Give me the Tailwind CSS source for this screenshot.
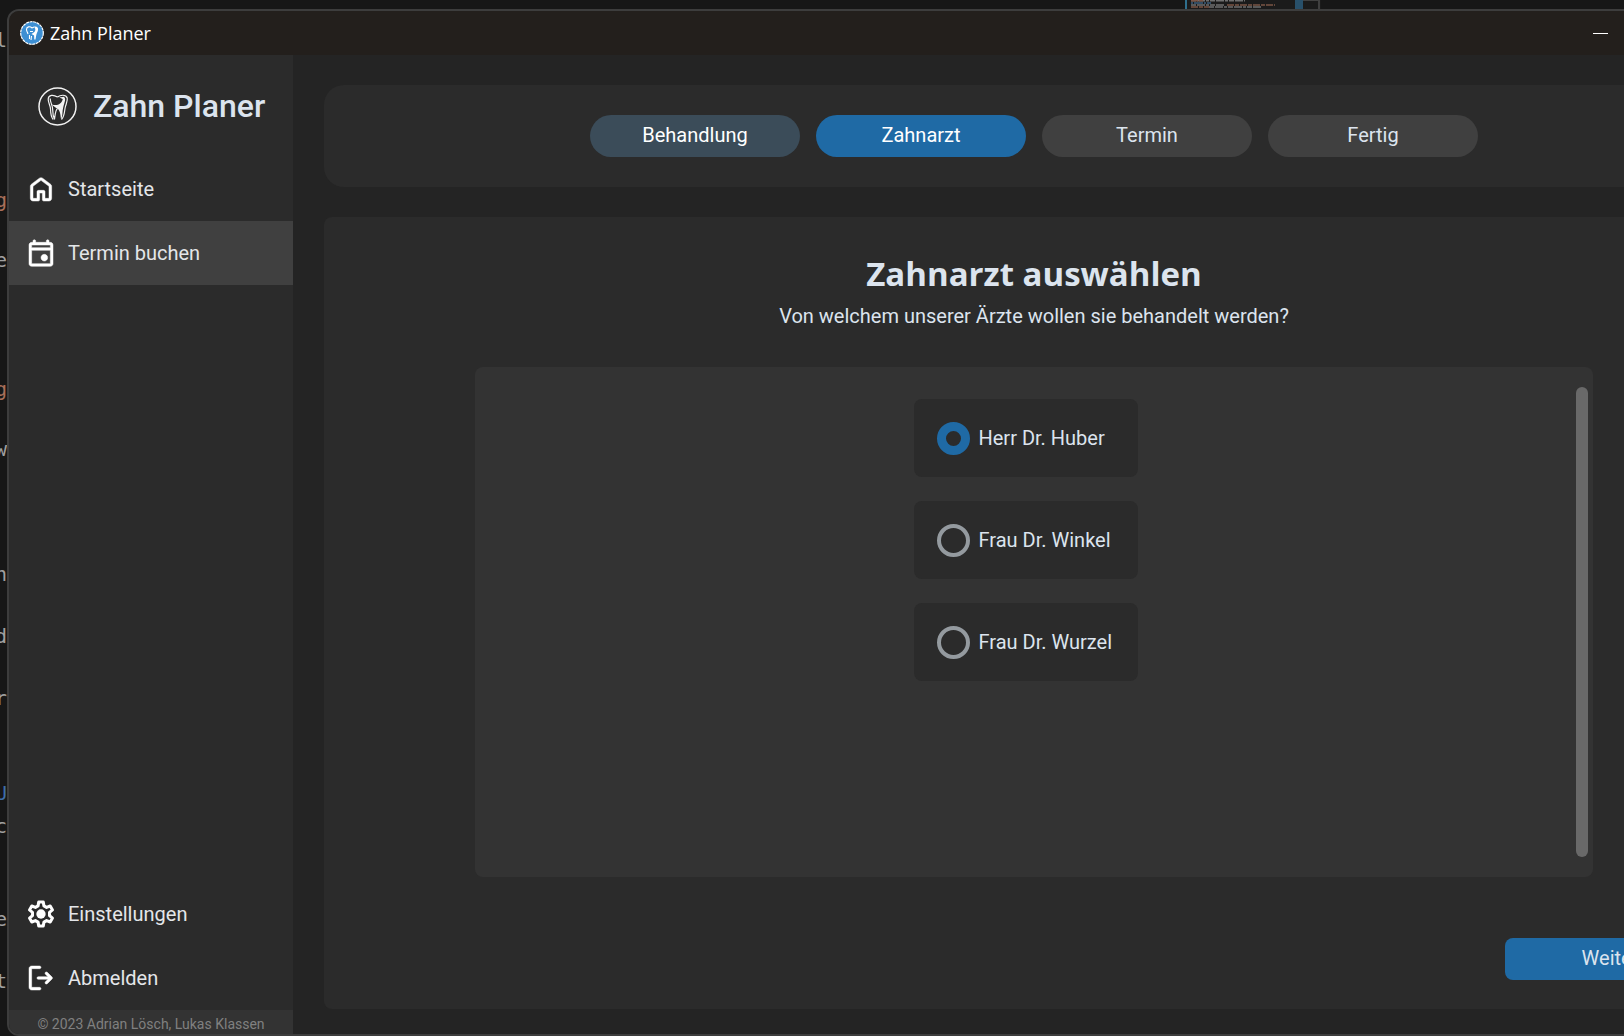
<!DOCTYPE html>
<html lang="de">
<head>
<meta charset="utf-8">
<title>Zahn Planer</title>
<script src="https://cdn.jsdelivr.net/npm/@tailwindcss/browser@4"></script>
</head>
<body class="relative flex h-screen overflow-hidden bg-[#171717] pl-[7px] pt-[9px] font-['Roboto',sans-serif] text-xl leading-6 text-[#dce4ee]">

  <!-- editor behind the window -->
  <div class="absolute inset-y-0 left-0 w-[7px] overflow-hidden font-['DejaVu_Sans_Mono',monospace] text-[#a0a0a0]" aria-hidden="true">
    <span class="absolute right-0 top-[28px]">l</span>
    <span class="absolute right-0 top-[188px] text-[#a86f5a]">g</span>
    <span class="absolute right-0 top-[248px]">e</span>
    <span class="absolute right-0 top-[377px] text-[#a86f5a]">g</span>
    <span class="absolute right-0 top-[437px]">w</span>
    <span class="absolute right-0 top-[562px]">n</span>
    <span class="absolute right-0 top-[624px]">d</span>
    <span class="absolute right-0 top-[686px]">r</span>
    <span class="absolute right-0 top-[781px] text-[#3f6ea8]">U</span>
    <span class="absolute right-0 top-[814px]">c</span>
    <span class="absolute right-0 top-[907px]">e</span>
    <span class="absolute right-0 top-[969px]">t</span>
  </div>
  <svg class="absolute left-[1185px] top-0" width="136" height="9" viewBox="0 0 136 9" aria-hidden="true">
    <path fill="#1b1b1b" d="M0 0h136v9H0z"/>
    <path fill="#2f6f8d" d="M0 0h2v9H0z"/>
    <path fill="#28506a" d="M110 0h8v9h-8z"/>
    <path fill="#404040" d="M133 0h2v9h-2zM118 0h15v1h-15z"/>
    <g stroke-width="1.4" fill="none">
      <path stroke="#6f6f6f" stroke-dasharray="5 1 8 1 3 1" d="M6 .7h54M6 5h34M24 7h52"/>
      <path stroke="#7b5546" stroke-dasharray="7 1 4 1" d="M6 .7h13M42 5h48M6 7h18"/>
      <path stroke="#3c5f7e" stroke-dasharray="2 1 9 1" d="M6 3h20"/>
    </g>
  </svg>

  <!-- the window runs past the right screen edge -->
  <div class="relative -mr-[153px] flex min-w-0 flex-1 flex-col overflow-hidden rounded-l-xl border-2 border-[#3d3d3d] bg-[#242424]">
    <header class="flex h-11 shrink-0 items-center gap-[6px] bg-[#231f1c] pl-[11px] pr-[167px] text-white">
      <svg width="24" height="24" viewBox="0 0 24 24" aria-hidden="true">
        <circle cx="12" cy="12" r="11.3" fill="#3d8fd3" stroke="#fff" stroke-width="1.2" stroke-dasharray="3 .6"/>
        <path fill="none" stroke="#fff" stroke-width="1.1" d="M12 7C10 5 6.500 5.500 6.500 8.500c0 2 1 2.500 1.500 4.500M12 7l2-1M10 10.500h3M9.500 14v4M11.500 15l-.5 4"/>
        <path fill="#fff" d="M14 5.500c3-.5 4.500 1 4 3.500-.3 2-1.600 3.500-1.900 6l-.6 3.500h-1.200l-.2-4-2.600-1.500c3-1.500 4-3 3.800-5z"/>
      </svg>
      <span class="flex-1 font-['Open_Sans',sans-serif] text-lg leading-6">Zahn Planer</span>
      <button class="flex h-6 w-[15px] items-center" aria-label="Minimieren"><span class="h-px w-full bg-white"></span></button>
    </header>

    <div class="flex min-h-0 flex-1">
      <aside class="flex w-[284px] shrink-0 flex-col bg-[#2b2b2b]">
        <div class="flex h-[102px] shrink-0 items-center gap-4 pl-[29px]">
          <svg width="39" height="39" viewBox="0 0 39 39" fill="none" stroke="#f2f2f2" aria-hidden="true">
            <circle cx="19.500" cy="19.500" r="18.500" stroke-width="1.500"/>
            <path stroke-width="1.200" d="M19.500 10C15.500 7.500 10.500 7.500 10.200 12c-.2 3.500 2.200 6.500 2.300 10 .1 4.500.8 8.500 2.800 10.500M12.200 11.500c0 4.500 2.600 6.500 2.500 11.500 0 4 .6 7 2 9.500M16.500 32.500c.5-4 .8-9.500 3-11M19.500 10c3-2.300 8.500-2.700 9.700 1 .8 3-1.600 6.500-2.200 10.500-.6 4-.8 8.500-3.500 11"/>
            <path fill="#f2f2f2" stroke="none" d="M14 17.500c5 1.500 9.500 0 10.800-5.500l-3.500-1.500 4.500-.8c2.200 1.500 1.200 4.500.4 7-1 3-1.500 6-1.700 8.500-.2 3-.4 5.500-1.400 7.300-.6-3-.6-6.500-2-9-1.200-2.600-5-3-7.100-6z"/>
          </svg>
          <span class="text-[32px] leading-8 font-medium">Zahn Planer</span>
        </div>

        <nav class="flex flex-1 flex-col text-[#e4e6e9]">
          <a href="#start" class="flex h-16 items-center gap-[11px] pl-4">
            <svg class="size-8 fill-white stroke-white" stroke-width=".35" viewBox="0 0 24 24" aria-hidden="true"><path d="M6 19h3v-5q0-.425.288-.712T10 13h4q.425 0 .713.288T15 14v5h3v-9l-6-4.500L6 10v9Zm-2 0v-9q0-.475.213-.9t.587-.7l6-4.500q.525-.4 1.200-.4t1.200.4l6 4.500q.375.275.588.7T20 10v9q0 .825-.588 1.413T18 21h-4q-.425 0-.712-.288T13 20v-5h-2v5q0 .425-.288.713T10 21H6q-.825 0-1.412-.587T4 19Z"/></svg>
            Startseite
          </a>
          <a href="#termin" aria-current="page" class="flex h-16 items-center gap-[11px] bg-[#404040] pl-4">
            <svg class="size-8 fill-white stroke-white" stroke-width=".35" viewBox="0 0 24 24" aria-hidden="true"><path d="M14.500 18q-1.050 0-1.775-.725T12 15.500q0-1.050.725-1.775T14.500 13q1.050 0 1.775.725T17 15.500q0 1.050-.725 1.775T14.500 18ZM5 22q-.825 0-1.412-.587T3 20V6q0-.825.588-1.412T5 4h1V3q0-.425.288-.712T7 2q.425 0 .713.288T8 3v1h8V3q0-.425.288-.712T17 2q.425 0 .713.288T18 3v1h1q.825 0 1.413.588T21 6v14q0 .825-.587 1.413T19 22H5Zm0-2h14V10H5v10ZM5 8h14V6H5v2Z"/></svg>
            Termin buchen
          </a>
          <a href="#einstellungen" class="mt-auto flex h-16 items-center gap-[11px] pl-4">
            <svg class="size-8" viewBox="0 .5 24 24" aria-hidden="true">
              <path fill="none" stroke="#fff" stroke-width="2.300" stroke-linejoin="round" d="M10.300 3.500h3.400l.5 2.900 2 1.150 2.700-1.050 1.700 2.950-2.200 1.850v2.400l2.200 1.850-1.700 2.950-2.700-1.050-2 1.150-.5 2.900h-3.400l-.5-2.900-2-1.150-2.700 1.050-1.700-2.950 2.200-1.850v-2.400L3.400 9.450 5.100 6.500l2.700 1.050 2-1.150z"/>
              <circle cx="12" cy="12.500" r="3.500" fill="#fff"/>
            </svg>
            Einstellungen
          </a>
          <a href="#abmelden" class="flex h-16 items-center gap-[11px] pl-4">
            <svg class="size-8 fill-white stroke-white" stroke-width=".35" viewBox="0 0 24 24" aria-hidden="true"><path d="M5 21q-.825 0-1.412-.587T3 19V5q0-.825.588-1.412T5 3h6q.425 0 .713.288T12 4q0 .425-.288.713T11 5H5v14h6q.425 0 .713.288T12 20q0 .425-.288.713T11 21H5Zm12.175-8H10q-.425 0-.712-.288T9 12q0-.425.288-.712T10 11h7.175L15.300 9.125q-.275-.275-.275-.675t.275-.7q.275-.3.7-.313t.725.288L20.300 11.300q.3.3.3.7t-.3.7l-3.575 3.575q-.3.3-.712.288T15.300 16.250q-.275-.3-.262-.712t.287-.688L17.175 13Z"/></svg>
            Abmelden
          </a>
        </nav>
        <footer class="flex h-6 shrink-0 items-end justify-center bg-[#333333] text-sm leading-5 text-[#808080]">© 2023 Adrian Lösch, Lukas Klassen</footer>
      </aside>

      <main class="flex min-w-0 flex-1 flex-col gap-[30px] px-[31px] pb-[25px] pt-[30px]">
        <ol class="flex h-[102px] shrink-0 items-center justify-center gap-4 rounded-[20px] bg-[#2b2b2b]">
          <li><button class="h-[42px] w-[210px] rounded-full bg-[#3b4c59] pb-0.5 text-white">Behandlung</button></li>
          <li><button class="h-[42px] w-[210px] rounded-full bg-[#1f6aa5] pb-0.5 text-white" aria-current="step">Zahnarzt</button></li>
          <li><button class="h-[42px] w-[210px] rounded-full bg-[#404040] pb-0.5">Termin</button></li>
          <li><button class="h-[42px] w-[210px] rounded-full bg-[#404040] pb-0.5">Fertig</button></li>
        </ol>

        <section class="flex min-h-0 flex-1 flex-col items-center rounded-lg bg-[#2b2b2b] pb-[29px] pt-[33px]">
          <h1 class="font-['Open_Sans',sans-serif] text-[33px] leading-[48px] font-bold">Zahnarzt auswählen</h1>
          <p class="pt-[6px]">Von welchem unserer Ärzte wollen sie behandelt werden?</p>

          <div class="mt-[39px] flex w-full min-h-0 flex-1 px-[151px]">
            <fieldset class="flex min-w-0 flex-1 rounded-lg bg-[#333333]">
              <legend class="sr-only">Zahnarzt</legend>
              <div class="flex flex-1 flex-col items-center gap-6 pt-8">
                <label class="flex h-[78px] w-56 items-center gap-[9px] rounded-lg bg-[#2b2b2b] pl-[23px]"><input type="radio" name="arzt" checked class="size-[33px] appearance-none rounded-full border-4 border-[#949a9f] checked:border-[9px] checked:border-[#1f6aa5]">Herr Dr. Huber</label>
                <label class="flex h-[78px] w-56 items-center gap-[9px] rounded-lg bg-[#2b2b2b] pl-[23px]"><input type="radio" name="arzt" class="size-[33px] appearance-none rounded-full border-4 border-[#949a9f] checked:border-[9px] checked:border-[#1f6aa5]">Frau Dr. Winkel</label>
                <label class="flex h-[78px] w-56 items-center gap-[9px] rounded-lg bg-[#2b2b2b] pl-[23px]"><input type="radio" name="arzt" class="size-[33px] appearance-none rounded-full border-4 border-[#949a9f] checked:border-[9px] checked:border-[#1f6aa5]">Frau Dr. Wurzel</label>
              </div>
              <div class="flex py-5 pr-[5px]"><div class="w-3 rounded-full bg-[#696969]"></div></div>
            </fieldset>
          </div>

          <button class="mr-[29px] mt-[61px] h-[42px] w-[210px] shrink-0 self-end rounded-lg bg-[#1f6aa5] pb-0.5">Weiter</button>
        </section>
      </main>
    </div>
  </div>
</body>
</html>
